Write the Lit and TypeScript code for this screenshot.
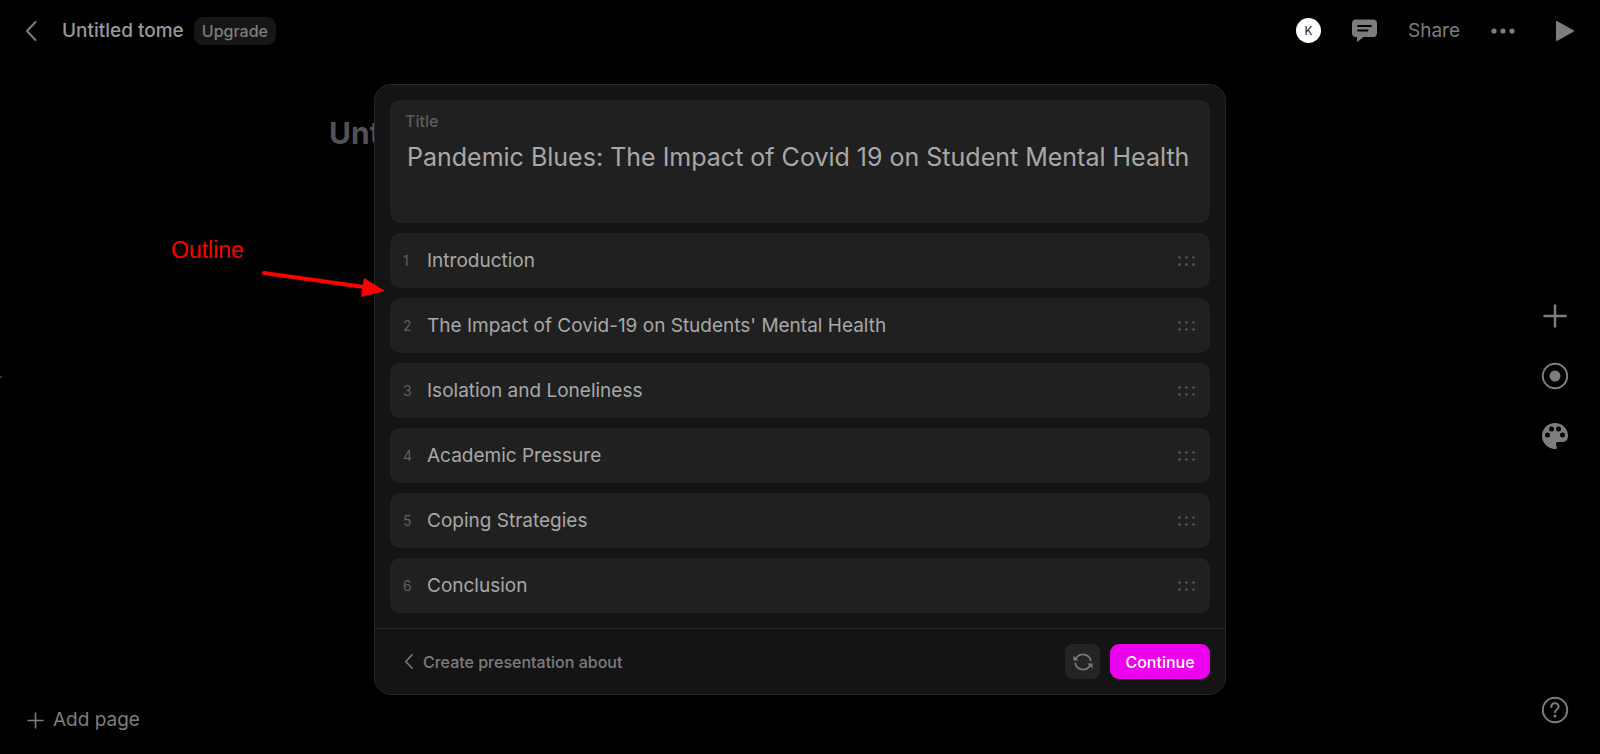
import { LitElement, html, css, svg } from "lit";
import { customElement, state } from "lit/decorators.js";

const chevron = svg`<path d="M9.5 1 L1 10 L9.5 19" fill="none" stroke="currentColor" stroke-width="2" stroke-linecap="round" stroke-linejoin="round"/>`;

@customElement("outline-row")
class OutlineRow extends LitElement {
  static properties = { index: { type: Number }, value: { type: String } };
  declare index: number;
  declare value: string;

  static styles = css`
    :host { display: block; }
    .row {
      display: flex;
      align-items: center;
      height: 55px;
      padding: 0 15px 0 13px;
      border-radius: 10px;
      background: #202020;
      box-sizing: border-box;
    }
    .num { width: 24px; font-size: 14px; color: #5f5f5f; }
    .text {
      flex: 1;
      min-width: 0;
      padding: 0;
      border: 0;
      outline: 0;
      background: none;
      color: #a8a8a8;
      font: 400 19px/28px Inter, sans-serif;
    }
    .grip {
      display: flex;
      padding: 0;
      border: 0;
      background: none;
      color: #585858;
      cursor: grab;
    }
  `;

  render() {
    return html`
      <div class="row">
        <label class="num" for="text">${this.index}</label>
        <input class="text" id="text" .value=${this.value} />
        <button class="grip" aria-label="Reorder">
          <svg width="17" height="10" viewBox="0 0 17 10" fill="currentColor">
            ${[1.5, 8.5, 15.5].map((x) => [1.5, 8.5].map((y) => svg`<circle cx=${x} cy=${y} r="1.3"/>`))}
          </svg>
        </button>
      </div>
    `;
  }
}

@customElement("app-root")
class AppRoot extends LitElement {
  @state() sections = [
    "Introduction",
    "The Impact of Covid-19 on Students' Mental Health",
    "Isolation and Loneliness",
    "Academic Pressure",
    "Coping Strategies",
    "Conclusion",
  ];

  static styles = css`
    :host {
      display: flex;
      flex-direction: column;
      position: relative;
      min-height: 100vh;
      overflow: hidden;
      background: #000;
      color: #7d7d7d;
      font-family: Inter, sans-serif;
      font-size: 19px;
      line-height: 28px;
    }
    * { box-sizing: border-box; }
    svg { display: block; flex: none; }
    button {
      display: flex;
      align-items: center;
      justify-content: center;
      padding: 0;
      border: 0;
      background: none;
      color: inherit;
      font: inherit;
      cursor: pointer;
    }
    .bar {
      display: flex;
      align-items: center;
      justify-content: space-between;
      height: 61px;
      padding: 0 26px;
    }
    .group { display: flex; align-items: center; }
    .name { margin: 0 10px 0 24px; font-size: 19px; font-weight: 500; color: #999; }
    .upgrade {
      height: 28px;
      padding: 0 8px;
      border-radius: 9px;
      background: #161616;
      font-size: 16px;
      font-weight: 500;
    }
    .avatar {
      width: 25px;
      height: 25px;
      border-radius: 50%;
      background: #fff;
      color: #222;
      font-size: 12px;
    }
    .actions { gap: 31px; }
    .play { margin-left: 10px; }
    .page { display: flex; flex: 1; }
    .canvas { flex: 1; padding: 52px 0 0 329px; }
    .heading { margin: 0; font-size: 30px; line-height: 40px; font-weight: 700; color: #525252; }
    .rail {
      display: flex;
      flex-direction: column;
      align-items: center;
      justify-content: center;
      gap: 32px;
      width: 90px;
      padding-top: 7px;
    }
    .foot {
      display: flex;
      align-items: center;
      justify-content: space-between;
      height: 70px;
      padding: 0 31px 18px 27px;
    }
    .add { gap: 9px; padding-top: 20px; }
    .caret {
      position: absolute;
      left: 0;
      top: 376px;
      width: 2px;
      height: 2px;
      background: #80007c;
    }
    .overlay {
      position: absolute;
      inset: 84px 24px auto;
      display: flex;
      justify-content: center;
    }
    .dialog {
      width: 852px;
      max-width: 100%;
      border: 1px solid #262626;
      border-radius: 17px;
      background: #141414;
    }
    .fields { display: grid; gap: 10px; padding: 15px; }
    .title-box { height: 123px; padding: 10px 15px; border-radius: 10px; background: #202020; }
    .label { display: block; font-size: 16px; line-height: 22px; color: #5c5c5c; font-weight: 500; }
    .title {
      display: block;
      width: 100%;
      height: 64px;
      margin-top: 8px;
      padding: 0 2px;
      border: 0;
      outline: 0;
      resize: none;
      overflow: hidden;
      background: none;
      color: #a8a8a8;
      font: 400 25px/34px Inter, sans-serif;
    }
    .controls {
      display: flex;
      align-items: center;
      gap: 10px;
      padding: 15px;
      border-top: 1px solid #2a2a2a;
    }
    .back { gap: 9px; margin-right: auto; padding-left: 15px; font-size: 16px; font-weight: 500; }
    .retry { width: 35px; height: 35px; border-radius: 8px; background: #242424; }
    .continue {
      width: 100px;
      height: 35px;
      border-radius: 9px;
      background: #ed00ed;
      color: #fff;
      font-size: 16px;
      font-weight: 500;
    }
    .note {
      position: absolute;
      left: 171px;
      top: 236px;
      color: #f00;
      font: 23px/28px "Liberation Sans", sans-serif;
    }
    .arrow { position: absolute; left: 260px; top: 268px; }
  `;

  render() {
    return html`
      <header class="bar">
        <div class="group">
          <button aria-label="Back">
            <svg width="12" height="20" viewBox="0 0 12 20">${chevron}</svg>
          </button>
          <h1 class="name">Untitled tome</h1>
          <button class="upgrade">Upgrade</button>
        </div>
        <div class="group actions">
          <button class="avatar">K</button>
          <button aria-label="Comments">
            <svg width="25" height="23" viewBox="0 0 25 23">
              <path d="M4 0.5H21A4 4 0 0 1 25 4.500V14A4 4 0 0 1 21 18H11.500L6 22.500Q5 23 5 21.800V18H4A4 4 0 0 1 0 14V4.500A4 4 0 0 1 4 .5Z" fill="currentColor"/>
              <path d="M6 7H19M6 11.500H15.500" stroke="#000" stroke-width="1.800" stroke-linecap="round"/>
            </svg>
          </button>
          <button>Share</button>
          <button aria-label="More">
            <svg width="24" height="6" viewBox="0 0 24 6" fill="currentColor">
              <circle cx="3" cy="3" r="2.6"/><circle cx="12" cy="3" r="2.6"/><circle cx="21" cy="3" r="2.6"/>
            </svg>
          </button>
          <button class="play" aria-label="Play">
            <svg width="18" height="20" viewBox="0 0 18 20">
              <path d="M1 1V19L17 10Z" fill="currentColor" stroke="currentColor" stroke-width="2" stroke-linejoin="round"/>
            </svg>
          </button>
        </div>
      </header>

      <main class="page">
        <div class="canvas"><h2 class="heading">Untitled tome</h2></div>
        <nav class="rail">
          <button aria-label="Add">
            <svg width="28" height="28" viewBox="0 0 28 28">
              <path d="M14 3.500V24.500M3.500 14H24.500" stroke="currentColor" stroke-width="2.500" stroke-linecap="round"/>
            </svg>
          </button>
          <button aria-label="Record">
            <svg width="28" height="28" viewBox="0 0 28 28">
              <circle cx="14" cy="14" r="12.200" fill="none" stroke="currentColor" stroke-width="2"/>
              <circle cx="14" cy="14" r="5.500" fill="currentColor"/>
            </svg>
          </button>
          <button aria-label="Theme">
            <svg width="28" height="28" viewBox="0 0 28 28">
              <path d="M14 1C6.800 1 1 6.800 1 14C1 21 7 27 14.500 27C15.500 27 16 26.500 15.800 25.500C15.400 24 15 23.500 15 22C15 20.800 15.500 20 17 20H21.500C25 20 27 17.500 27 13.500C27 6.500 21 1 14 1Z" fill="currentColor"/>
              <g fill="#000"><circle cx="6.500" cy="13" r="2.500"/><circle cx="10.500" cy="7" r="2.500"/><circle cx="17.500" cy="7" r="2.500"/><circle cx="21.500" cy="13" r="2.500"/></g>
            </svg>
          </button>
        </nav>
      </main>

      <footer class="foot">
        <button class="add">
          <svg width="17" height="17" viewBox="0 0 17 17">
            <path d="M8.500 1V16M1 8.500H16" stroke="currentColor" stroke-width="1.600" stroke-linecap="round"/>
          </svg>
          Add page
        </button>
        <button aria-label="Help">
          <svg width="28" height="28" viewBox="0 0 28 28" fill="none" stroke="currentColor" stroke-width="2" stroke-linecap="round">
            <circle cx="14" cy="14" r="12.200"/>
            <path d="M10.300 11C10.300 8.700 12 7.300 14 7.300S17.700 8.700 17.700 10.800C17.700 13.500 14 13.600 14 16.300"/>
            <circle cx="14" cy="20" r="0.600" fill="currentColor"/>
          </svg>
        </button>
      </footer>

      <div class="caret"></div>

      <div class="overlay">
        <form class="dialog" @submit=${(e: Event) => e.preventDefault()}>
          <div class="fields">
            <div class="title-box">
              <label class="label" for="title">Title</label>
              <textarea class="title" id="title" .value=${"Pandemic Blues: The Impact of Covid 19 on Student Mental Health"}></textarea>
            </div>
            ${this.sections.map((s, i) => html`<outline-row .index=${i + 1} .value=${s}></outline-row>`)}
          </div>
          <div class="controls">
            <button class="back" type="button">
              <svg width="9" height="15" viewBox="0 0 12 20">${chevron}</svg>
              Create presentation about
            </button>
            <button class="retry" type="button" aria-label="Regenerate">
              <svg width="20" height="18" viewBox="0 0 20 18">
                <path d="M3 5.500A8 8 0 0 1 17.800 8M17 12.500A8 8 0 0 1 2.200 10" fill="none" stroke="currentColor" stroke-width="1.600"/>
                <path d="M.5 2.500V7.500H5.500ZM19.500 15.500V10.500H14.500Z" fill="currentColor"/>
              </svg>
            </button>
            <button class="continue" type="submit">Continue</button>
          </div>
        </form>
      </div>

      <div class="note">Outline</div>
      <svg class="arrow" width="126" height="32" viewBox="0 0 126 32">
        <path d="M4 5L104 19" stroke="#f00" stroke-width="4.200" stroke-linecap="round"/>
        <path d="M104 10L125 23L101 29Z" fill="#f00"/>
      </svg>
    `;
  }
}
